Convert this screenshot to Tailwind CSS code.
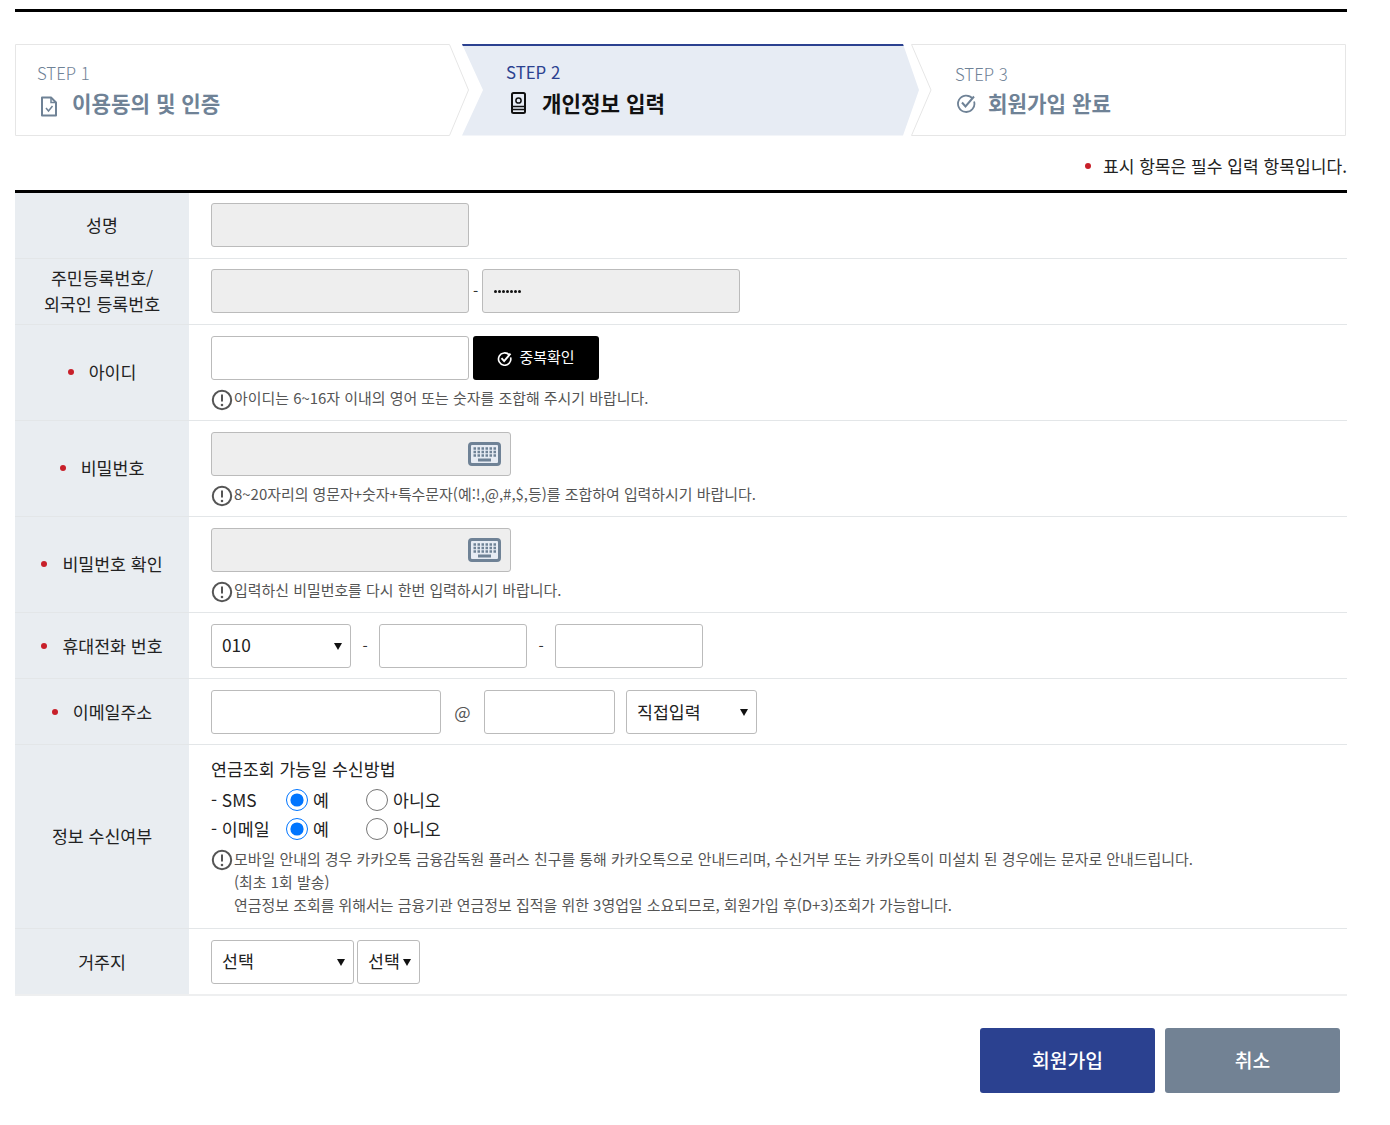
<!DOCTYPE html>
<html lang="ko">
<head>
  <meta charset="UTF-8" />
  <title>회원가입</title>
  <script src="https://cdn.jsdelivr.net/npm/@tailwindcss/browser@4"></script>
</head>
<body class="bg-white text-[#222] font-['Noto_Sans_CJK_KR','Noto_Sans',sans-serif] text-[17.3px]">
  <div class="w-[1332px] ml-[15px] pt-[9px] pb-[32px]">
    <div class="h-[3px] bg-black"></div>

    <!-- Steps -->
    <div class="flex mt-[32px] h-[92px]">
      <div class="relative w-[454px] h-[92px]">
        <svg class="absolute inset-0" width="454" height="92"><polygon points="0.5,0.5 434.5,0.5 453.5,46 434.5,91.5 0.5,91.5" fill="#fff" stroke="#e6e6e6"/></svg>
        <div class="relative pl-[22px] pt-[17px]">
          <div class="h-[24px] leading-[24px] text-[16.8px] font-light text-[#6f8296]">STEP 1</div>
          <div class="flex items-center h-[36px] text-[21.2px] font-bold text-[#6f8296]">
            <svg class="ml-[3px] mr-[14px] mt-[6px]" width="18" height="21" viewBox="0 0 18 21" fill="none" stroke="#6f8296" stroke-width="2"><path d="M2 1.5h9l5 5v13H2z" stroke-linejoin="round"/><path d="M11 1.5v5h5" stroke-width="1.5"/><path d="M6 12l2.5 3 4-5" stroke-width="1.5"/></svg>
            이용동의 및 인증
          </div>
        </div>
      </div>
      <div class="relative w-[457px] h-[92px] ml-[-7px]">
        <svg class="absolute inset-0" width="457" height="92"><polygon points="0,0 441,0 457,46 441,91.5 0,91.5 21,46" fill="#e7ecf4"/><polygon points="0,0 441,0 441.7,2 0.8,2" fill="#2b4190"/></svg>
        <div class="relative pl-[44px] pt-[16px]">
          <div class="h-[24px] leading-[24px] text-[16.8px] text-[#2b4190]">STEP 2</div>
          <div class="flex items-center h-[38px] text-[21.2px] font-bold text-[#111]">
            <svg class="ml-[5px] mr-[16px]" width="15" height="22" viewBox="0 0 15 22" fill="none" stroke="#111" stroke-width="2"><rect x="1" y="1" width="13" height="20" rx="1.5"/><circle cx="7.5" cy="8.5" r="2.6" stroke-width="1.5"/><path d="M1 14.5h13M1 17.5h13" stroke-width="1.5"/></svg>
            개인정보 입력
          </div>
        </div>
      </div>
      <div class="relative w-[435px] h-[92px] ml-[-8px]">
        <svg class="absolute inset-0" width="435" height="92"><polygon points="0.5,0.5 434.5,0.5 434.5,91.5 0.5,91.5 20,46" fill="#fff" stroke="#e6e6e6"/></svg>
        <div class="relative pl-[44px] pt-[18px]">
          <div class="h-[24px] leading-[24px] text-[16.8px] font-light text-[#6f8296]">STEP 3</div>
          <div class="flex items-center h-[34px] text-[21.2px] font-bold text-[#6f8296]">
            <svg class="ml-[1px] mr-[12px]" width="20" height="20" viewBox="0 0 20 20" fill="none" stroke="#6f8296" stroke-width="1.8"><path d="M16.5 5.5a8.2 8.2 0 1 0 1.6 3"/><path d="M6 9.5l3.5 4L18 3.5" stroke-width="2"/></svg>
            회원가입 완료
          </div>
        </div>
      </div>
    </div>

    <div class="flex justify-end items-center h-[24px] mt-[18px] leading-[24px] text-[17.1px]">
      <span class="w-[6px] h-[6px] rounded-full bg-[#c8202a] mr-[12px]"></span>표시 항목은 필수 입력 항목입니다.
    </div>

    <!-- Form -->
    <div class="mt-[12px] border-t-[3px] border-black">
      <div class="flex border-b border-[#e3e6e8]">
        <div class="w-[174px] shrink-0 bg-[#e9edf1] flex items-center justify-center pb-[2px]">성명</div>
        <div class="pl-[22px] pt-[10px] pb-[11px]">
          <input disabled class="block w-[258px] h-[44px] bg-[#eee] border border-[#bbb] rounded-[3px]" />
        </div>
      </div>

      <div class="flex border-b border-[#e3e6e8]">
        <div class="w-[174px] shrink-0 bg-[#e9edf1] flex items-center justify-center text-center leading-[26px] pb-[1px]">주민등록번호/<br />외국인 등록번호</div>
        <div class="pl-[22px] pt-[10px] pb-[11px] flex items-center">
          <input disabled class="block w-[258px] h-[44px] bg-[#eee] border border-[#bbb] rounded-[3px]" />
          <span class="w-[13px] text-center text-[15px] text-[#333]">-</span>
          <div class="w-[258px] h-[44px] bg-[#eee] border border-[#bbb] rounded-[3px] pl-[11px] flex items-center gap-[1px]">
            <span class="w-[3px] h-[3px] rounded-full bg-[#111]"></span><span class="w-[3px] h-[3px] rounded-full bg-[#111]"></span><span class="w-[3px] h-[3px] rounded-full bg-[#111]"></span><span class="w-[3px] h-[3px] rounded-full bg-[#111]"></span><span class="w-[3px] h-[3px] rounded-full bg-[#111]"></span><span class="w-[3px] h-[3px] rounded-full bg-[#111]"></span><span class="w-[3px] h-[3px] rounded-full bg-[#111]"></span>
          </div>
        </div>
      </div>

      <div class="flex border-b border-[#e3e6e8]">
        <div class="w-[174px] shrink-0 bg-[#e9edf1] flex items-center justify-center pb-[2px]"><span class="w-[6px] h-[6px] rounded-full bg-[#c8202a] mr-[15px]"></span>아이디</div>
        <div class="pl-[22px] pt-[11px] pb-[10px]">
          <div class="flex">
            <input class="block w-[258px] h-[44px] bg-white border border-[#bbb] rounded-[3px]" />
            <button class="ml-[4px] w-[126px] h-[44px] bg-black text-white rounded-[3px] flex items-center justify-center text-[15px] pb-[1px]">
              <svg class="mr-[7px] mt-[1px]" width="15" height="15" viewBox="0 0 20 20" fill="none" stroke="#fff" stroke-width="2.2"><path d="M16.5 5.5a8.2 8.2 0 1 0 1.6 3"/><path d="M6 9.5l3.5 4L18 3.5" stroke-width="2.6"/></svg>
              중복확인
            </button>
          </div>
          <div class="flex items-center h-[23px] mt-[7px] text-[14.95px] text-[#555]">
            <svg class="mr-[1px] shrink-0 mt-[3px]" width="22" height="22" viewBox="0 0 22 22" fill="none" stroke="#555" stroke-width="2"><circle cx="11" cy="11" r="9.2"/><path d="M11 5.5v7"/><circle cx="11" cy="16" r="0.6" stroke-width="1.4"/></svg>
            아이디는 6~16자 이내의 영어 또는 숫자를 조합해 주시기 바랍니다.
          </div>
        </div>
      </div>

      <div class="flex border-b border-[#e3e6e8]">
        <div class="w-[174px] shrink-0 bg-[#e9edf1] flex items-center justify-center pb-[1px]"><span class="w-[6px] h-[6px] rounded-full bg-[#c8202a] mr-[15px]"></span>비밀번호</div>
        <div class="pl-[22px] pt-[11px] pb-[10px]">
          <div class="relative w-[300px]">
            <input type="password" disabled class="block w-[300px] h-[44px] bg-[#eee] border border-[#bbb] rounded-[3px]" />
            <svg class="absolute right-[10px] top-[10px]" width="33" height="24" viewBox="0 0 33 24"><rect x="1.5" y="1.5" width="30" height="21" rx="2.5" fill="#e7ecf4" stroke="#6f8296" stroke-width="3"/><path d="M5.5 6.5h2.5M9.5 6.5h2.5M13.5 6.5h2.5M17.5 6.5h2.5M21.5 6.5h2.5M25.5 6.5h2.5M5.5 10h2.5M9.5 10h2.5M13.5 10h2.5M17.5 10h2.5M21.5 10h2.5M25.5 10h2.5M5.5 13.5h2.5M9.5 13.5h2.5M13.5 13.5h2.5M17.5 13.5h2.5M21.5 13.5h2.5M25.5 13.5h2.5" stroke="#6f8296" stroke-width="2.4"/><path d="M10 18h13" stroke="#6f8296" stroke-width="3"/></svg>
          </div>
          <div class="flex items-center h-[23px] mt-[7px] text-[14.95px] text-[#555]">
            <svg class="mr-[1px] shrink-0 mt-[3px]" width="22" height="22" viewBox="0 0 22 22" fill="none" stroke="#555" stroke-width="2"><circle cx="11" cy="11" r="9.2"/><path d="M11 5.5v7"/><circle cx="11" cy="16" r="0.6" stroke-width="1.4"/></svg>
            8~20자리의 영문자+숫자+특수문자(예:!,@,#,$,등)를 조합하여 입력하시기 바랍니다.
          </div>
        </div>
      </div>

      <div class="flex border-b border-[#e3e6e8]">
        <div class="w-[174px] shrink-0 bg-[#e9edf1] flex items-center justify-center pb-[1px]"><span class="w-[6px] h-[6px] rounded-full bg-[#c8202a] mr-[15px]"></span>비밀번호 확인</div>
        <div class="pl-[22px] pt-[11px] pb-[10px]">
          <div class="relative w-[300px]">
            <input type="password" disabled class="block w-[300px] h-[44px] bg-[#eee] border border-[#bbb] rounded-[3px]" />
            <svg class="absolute right-[10px] top-[10px]" width="33" height="24" viewBox="0 0 33 24"><rect x="1.5" y="1.5" width="30" height="21" rx="2.5" fill="#e7ecf4" stroke="#6f8296" stroke-width="3"/><path d="M5.5 6.5h2.5M9.5 6.5h2.5M13.5 6.5h2.5M17.5 6.5h2.5M21.5 6.5h2.5M25.5 6.5h2.5M5.5 10h2.5M9.5 10h2.5M13.5 10h2.5M17.5 10h2.5M21.5 10h2.5M25.5 10h2.5M5.5 13.5h2.5M9.5 13.5h2.5M13.5 13.5h2.5M17.5 13.5h2.5M21.5 13.5h2.5M25.5 13.5h2.5" stroke="#6f8296" stroke-width="2.4"/><path d="M10 18h13" stroke="#6f8296" stroke-width="3"/></svg>
          </div>
          <div class="flex items-center h-[23px] mt-[7px] text-[14.95px] text-[#555]">
            <svg class="mr-[1px] shrink-0 mt-[3px]" width="22" height="22" viewBox="0 0 22 22" fill="none" stroke="#555" stroke-width="2"><circle cx="11" cy="11" r="9.2"/><path d="M11 5.5v7"/><circle cx="11" cy="16" r="0.6" stroke-width="1.4"/></svg>
            입력하신 비밀번호를 다시 한번 입력하시기 바랍니다.
          </div>
        </div>
      </div>

      <div class="flex border-b border-[#e3e6e8]">
        <div class="w-[174px] shrink-0 bg-[#e9edf1] flex items-center justify-center"><span class="w-[6px] h-[6px] rounded-full bg-[#c8202a] mr-[15px]"></span>휴대전화 번호</div>
        <div class="pl-[22px] pt-[11px] pb-[10px] flex items-center">
          <div class="relative w-[140px] h-[44px]">
            <select class="appearance-none w-full h-full bg-white border border-[#bbb] rounded-[3px] pl-[10px] pb-[2px]"><option>010</option></select>
            <svg class="absolute right-[9px] top-[19px]" width="8" height="7"><polygon points="0,0 8,0 4,7" fill="#111"/></svg>
          </div>
          <span class="w-[28px] text-center text-[15px] text-[#333]">-</span>
          <input class="block w-[148px] h-[44px] bg-white border border-[#bbb] rounded-[3px]" />
          <span class="w-[28px] text-center text-[15px] text-[#333]">-</span>
          <input class="block w-[148px] h-[44px] bg-white border border-[#bbb] rounded-[3px]" />
        </div>
      </div>

      <div class="flex border-b border-[#e3e6e8]">
        <div class="w-[174px] shrink-0 bg-[#e9edf1] flex items-center justify-center"><span class="w-[6px] h-[6px] rounded-full bg-[#c8202a] mr-[15px]"></span>이메일주소</div>
        <div class="pl-[22px] pt-[11px] pb-[10px] flex items-center">
          <input class="block w-[230px] h-[44px] bg-white border border-[#bbb] rounded-[3px]" />
          <span class="w-[43px] text-center text-[#555]">@</span>
          <input class="block w-[131px] h-[44px] bg-white border border-[#bbb] rounded-[3px]" />
          <div class="relative w-[131px] h-[44px] ml-[11px]">
            <select class="appearance-none w-full h-full bg-white border border-[#bbb] rounded-[3px] pl-[10px]"><option>직접입력</option></select>
            <svg class="absolute right-[9px] top-[19px]" width="8" height="7"><polygon points="0,0 8,0 4,7" fill="#111"/></svg>
          </div>
        </div>
      </div>

      <div class="flex border-b border-[#e3e6e8]">
        <div class="w-[174px] shrink-0 bg-[#e9edf1] flex items-center justify-center pb-[1px]">정보 수신여부</div>
        <div class="pl-[22px] pt-[12px] pb-[12px]">
          <div class="h-[24px] leading-[24px]">연금조회 가능일 수신방법</div>
          <div class="mt-[4px] h-[29px] flex items-center">
            <span class="w-[75px]">- SMS</span>
            <input type="radio" name="sms" checked class="w-[22px] h-[22px] m-0" />
            <span class="w-[58px] pl-[5px]">예</span>
            <input type="radio" name="sms" class="w-[22px] h-[22px] m-0" />
            <span class="pl-[5px]">아니오</span>
          </div>
          <div class="h-[29px] flex items-center">
            <span class="w-[75px]">- 이메일</span>
            <input type="radio" name="mail" checked class="w-[22px] h-[22px] m-0" />
            <span class="w-[58px] pl-[5px]">예</span>
            <input type="radio" name="mail" class="w-[22px] h-[22px] m-0" />
            <span class="pl-[5px]">아니오</span>
          </div>
          <div class="mt-[4px] text-[14.95px] leading-[23px] text-[#555]">
            <div class="flex items-center h-[23px]">
              <svg class="mr-[1px] shrink-0 mt-[3px]" width="22" height="22" viewBox="0 0 22 22" fill="none" stroke="#555" stroke-width="2"><circle cx="11" cy="11" r="9.2"/><path d="M11 5.5v7"/><circle cx="11" cy="16" r="0.6" stroke-width="1.4"/></svg>
              모바일 안내의 경우 카카오톡 금융감독원 플러스 친구를 통해 카카오톡으로 안내드리며, 수신거부 또는 카카오톡이 미설치 된 경우에는 문자로 안내드립니다.
            </div>
            <div class="pl-[23px]">(최초 1회 발송)</div>
            <div class="pl-[23px]">연금정보 조회를 위해서는 금융기관 연금정보 집적을 위한 3영업일 소요되므로, 회원가입 후(D+3)조회가 가능합니다.</div>
          </div>
        </div>
      </div>

      <div class="flex border-b-2 border-[#eeeff0]">
        <div class="w-[174px] shrink-0 bg-[#e9edf1] flex items-center justify-center">거주지</div>
        <div class="pl-[22px] pt-[11px] pb-[10px] flex items-center">
          <div class="relative w-[143px] h-[44px]">
            <select class="appearance-none w-full h-full bg-white border border-[#bbb] rounded-[3px] pl-[10px] pb-[2px]"><option>선택</option></select>
            <svg class="absolute right-[9px] top-[19px]" width="8" height="7"><polygon points="0,0 8,0 4,7" fill="#111"/></svg>
          </div>
          <div class="relative w-[63px] h-[44px] ml-[3px]">
            <select class="appearance-none w-full h-full bg-white border border-[#bbb] rounded-[3px] pl-[10px] pb-[2px]"><option>선택</option></select>
            <svg class="absolute right-[9px] top-[19px]" width="8" height="7"><polygon points="0,0 8,0 4,7" fill="#111"/></svg>
          </div>
        </div>
      </div>
    </div>

    <!-- Buttons -->
    <div class="flex justify-end gap-[10px] mt-[32px] pr-[7px]">
      <button class="w-[175px] h-[65px] bg-[#2b4190] text-white text-[19.3px] font-medium rounded-[3px]">회원가입</button>
      <button class="w-[175px] h-[65px] bg-[#728294] text-white text-[19.3px] font-medium rounded-[3px]">취소</button>
    </div>
  </div>
</body>
</html>
